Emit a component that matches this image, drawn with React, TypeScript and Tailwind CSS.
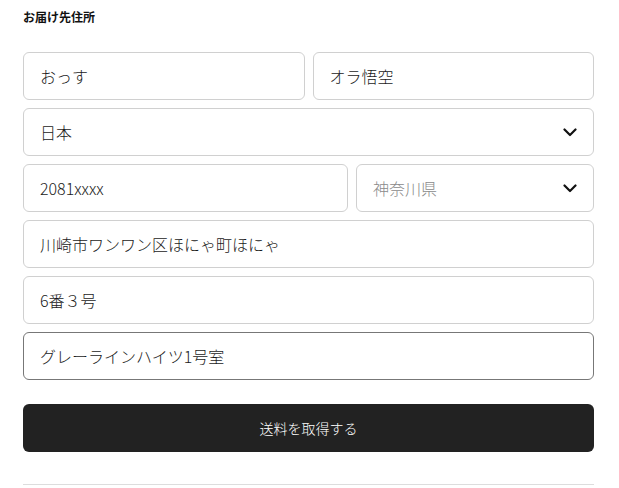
import React from "react";

function Chevron() {
  return (
    <svg viewBox="0 0 14 9" className="h-[9px] w-[14px]" fill="none" stroke="#111" strokeWidth={2.2} strokeLinecap="round" strokeLinejoin="round">
      <path d="M1.5 1.5l5.5 5.5 5.5-5.5" />
    </svg>
  );
}

function Field({ value, focused = false }: { value: string; focused?: boolean }) {
  return (
    <div
      className={`flex h-12 items-center rounded-md border bg-white px-4 text-base font-light text-[#1a1a1a] ${
        focused ? "border-[#777]" : "border-[#d0d0d0]"
      }`}
    >
      {value}
    </div>
  );
}

function Select({ value, placeholder = false }: { value: string; placeholder?: boolean }) {
  return (
    <div className="flex h-12 items-center justify-between rounded-md border border-[#d0d0d0] bg-white pl-4 pr-4 text-base font-light">
      <span className={placeholder ? "text-[#8a8a8a]" : "text-[#1a1a1a]"}>{value}</span>
      <Chevron />
    </div>
  );
}

export default function App() {
  return (
    <div
      className="min-h-[488px] bg-white pl-[23px] pr-[25px] pt-[9px]"
      style={{ fontFamily: '"Noto Sans CJK JP", "Noto Sans", sans-serif' }}
    >
      <h2 className="text-xs font-bold leading-4 text-[#111]">お届け先住所</h2>

      <div className="mt-[27px] flex flex-col gap-2">
        <div className="grid grid-cols-2 gap-2">
          <Field value="おっす" />
          <Field value="オラ悟空" />
        </div>
        <Select value="日本" />
        <div className="grid grid-cols-[325fr_238fr] gap-2">
          <Field value="2081xxxx" />
          <Select value="神奈川県" placeholder />
        </div>
        <Field value="川崎市ワンワン区ほにゃ町ほにゃ" />
        <Field value="6番３号" />
        <Field value="グレーラインハイツ1号室" focused />
      </div>

      <button
        type="button"
        className="mt-6 flex h-12 w-full items-center justify-center rounded-md bg-[#222] text-sm font-light text-white"
      >
        送料を取得する
      </button>

      <div className="mt-8 border-t border-[#ddd]" />
    </div>
  );
}
